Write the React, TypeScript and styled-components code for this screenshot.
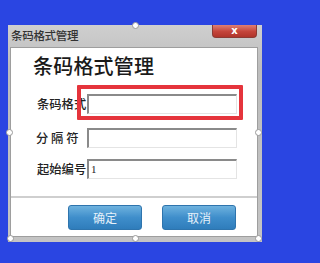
import styled, { createGlobalStyle } from 'styled-components';

const GlobalStyle = createGlobalStyle`
  * {
    margin: 0;
    padding: 0;
    box-sizing: border-box;
  }

  body {
    background: #2a45e2;
    font-family: 'Noto Sans CJK SC', 'Noto Sans', sans-serif;
    width: 270px;
    height: 263px;
    overflow: hidden;
  }
`;

const Stage = styled.div`
  width: 270px;
  height: 263px;
  padding: 25px 8px 0 8px;
`;

const Window = styled.div`
  position: relative;
  width: 254px;
  height: 217px;
  background: linear-gradient(#cfcfcf, #bdbdbd 20%, #c4c4c4);
  display: flex;
  flex-direction: column;
  padding: 0 4px 5px 2px;
`;

const TitleBar = styled.div`
  height: 22px;
  display: flex;
  align-items: flex-start;
  justify-content: space-between;
`;

const Caption = styled.span`
  font-size: 11.5px;
  line-height: 14px;
  font-weight: 500;
  margin-top: 3px;
  margin-left: 1px;
  color: #333;
  letter-spacing: -0.3px;
`;

const CloseButton = styled.div`
  width: 45px;
  height: 13px;
  margin-right: 1px;
  border: 1px solid #8c3a33;
  border-top: none;
  border-radius: 0 0 4px 4px;
  background: linear-gradient(#de7f73, #c4443a 55%, #b0352b);
  color: #fff;
  font-family: 'DejaVu Sans', sans-serif;
  font-size: 10px;
  font-weight: 700;
  line-height: 11px;
  text-align: center;
`;

const Panel = styled.div`
  flex: 1;
  background: #fff;
  border: 1px solid #9e9e9e;
  display: flex;
  flex-direction: column;
`;

const Heading = styled.h1`
  font-size: 20px;
  line-height: 20px;
  font-weight: 500;
  color: #1a1a1a;
  margin: 8px 0 0 22px;
  letter-spacing: 0.2px;
`;

const Form = styled.div`
  display: flex;
  flex-direction: column;
  padding-left: 19px;
`;

const Row = styled.div<{ $top: number }>`
  position: relative;
  display: flex;
  align-items: center;
  height: 20px;
  margin-top: ${p => p.$top}px;
`;

const Label = styled.span<{ $spaced?: boolean }>`
  width: 57px;
  font-size: 12.3px;
  font-weight: 500;
  color: #222;
  padding-left: ${p => (p.$spaced ? 6 : 7)}px;
  white-space: pre;
`;

const Input = styled.div`
  width: 150px;
  height: 20px;
  border: 1px solid #e4e4e4;
  border-top: 2px solid #8a8a8a;
  border-left: 2px solid #8a8a8a;
  font-family: 'Liberation Serif', serif;
  font-size: 11px;
  line-height: 16px;
  padding-left: 2px;
  color: #222;
`;

const Highlight = styled.div`
  position: absolute;
  left: 47px;
  top: -9px;
  width: 166px;
  height: 35px;
  border: 4px solid #e5343c;
  border-radius: 1px;
  pointer-events: none;
`;

const Divider = styled.div`
  height: 2px;
  background: #cfcfcf;
  margin-top: 17px;
`;

const Footer = styled.div`
  display: flex;
  gap: 20px;
  padding: 7px 0 0 57px;
`;

const Button = styled.div`
  width: 74px;
  height: 25px;
  border-radius: 3px;
  background: linear-gradient(#6eb2de, #3f8ecb 50%, #2f7dbb);
  border: 1px solid #2e74ad;
  color: #e6f1fa;
  font-size: 12px;
  line-height: 23px;
  text-align: center;
`;

const Handle = styled.div<{ $x: number; $y: number }>`
  position: absolute;
  left: ${p => p.$x - 3}px;
  top: ${p => p.$y - 3}px;
  width: 7px;
  height: 7px;
  border-radius: 50%;
  background: #fff;
  border: 1px solid #9a9a9a;
`;

const handles = [
  [127, 0],
  [1, 107], [250, 107],
  [2, 213], [127, 213], [250, 213],
];

export default function App() {
  return (
    <>
      <GlobalStyle />
      <Stage>
        <Window>
          <TitleBar>
            <Caption>条码格式管理</Caption>
            <CloseButton>x</CloseButton>
          </TitleBar>
          <Panel>
            <Heading>条码格式管理</Heading>
            <Form>
              <Row $top={18}>
                <Label>条码格式</Label>
                <Input />
                <Highlight />
              </Row>
              <Row $top={14}>
                <Label $spaced>{'分 隔 符'}</Label>
                <Input />
              </Row>
              <Row $top={11}>
                <Label>起始编号</Label>
                <Input>1</Input>
              </Row>
            </Form>
            <Divider />
            <Footer>
              <Button>确定</Button>
              <Button>取消</Button>
            </Footer>
          </Panel>
          {handles.map(([x, y]) => (
            <Handle key={`${x}-${y}`} $x={x} $y={y} />
          ))}
        </Window>
      </Stage>
    </>
  );
}
